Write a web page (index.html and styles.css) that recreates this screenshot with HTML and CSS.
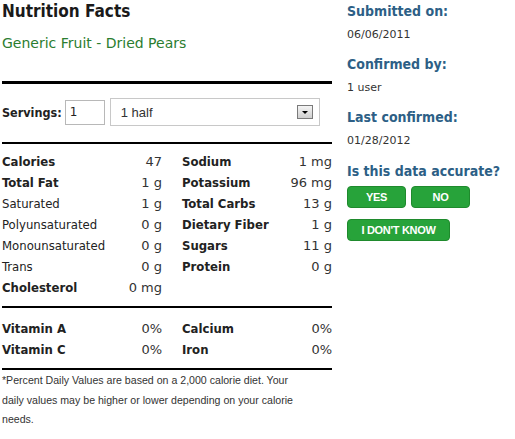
FILE: index.html
```html
<html>
<head>
<title>Nutrition Facts</title>
<link rel="stylesheet" href="styles.css">
</head>
<body>

<div class="page">
	<div class="facts">
		<h1 class="factsTitle">Nutrition Facts</h1>
		<div class="foodName">Generic Fruit - Dried Pears</div>

		<div class="servings">
			<label>Servings:</label>
			<input class="servingsQty" type="text" value="1">
			<div class="servingsUnit">
				<span>1 half</span>
				<span class="arrow"></span>
			</div>
		</div>

		<div class="nutrients">
			<div class="cell"><b>Calories</b><span>47</span></div>
			<div class="cell"><b>Sodium</b><span>1 mg</span></div>
			<div class="cell"><b>Total Fat</b><span>1 g</span></div>
			<div class="cell"><b>Potassium</b><span>96 mg</span></div>
			<div class="cell"><i>Saturated</i><span>1 g</span></div>
			<div class="cell"><b>Total Carbs</b><span>13 g</span></div>
			<div class="cell"><i>Polyunsaturated</i><span>0 g</span></div>
			<div class="cell"><b>Dietary Fiber</b><span>1 g</span></div>
			<div class="cell"><i>Monounsaturated</i><span>0 g</span></div>
			<div class="cell"><b>Sugars</b><span>11 g</span></div>
			<div class="cell"><i>Trans</i><span>0 g</span></div>
			<div class="cell"><b>Protein</b><span>0 g</span></div>
			<div class="cell"><b>Cholesterol</b><span>0 mg</span></div>
			<div class="cell"></div>
		</div>

		<div class="nutrients vitamins">
			<div class="cell"><b>Vitamin A</b><span>0%</span></div>
			<div class="cell"><b>Calcium</b><span>0%</span></div>
			<div class="cell"><b>Vitamin C</b><span>0%</span></div>
			<div class="cell"><b>Iron</b><span>0%</span></div>
		</div>

		<p class="footnote">*Percent Daily Values are based on a 2,000 calorie diet. Your daily values may be higher or lower depending on your calorie needs.</p>
	</div>

	<div class="sidebar">
		<h3>Submitted on:</h3>
		<div class="info">06/06/2011</div>
		<h3>Confirmed by:</h3>
		<div class="info">1 user</div>
		<h3>Last confirmed:</h3>
		<div class="info">01/28/2012</div>
		<h3 class="question">Is this data accurate?</h3>
		<div class="buttons">
			<a href="#" class="btn">YES</a>
			<a href="#" class="btn">NO</a>
		</div>
		<div class="buttons">
			<a href="#" class="btn wide">I DON'T KNOW</a>
		</div>
	</div>
</div>

</body>
</html>
```

FILE: styles.css
```css
body {
    margin: 0;
    font-family: "DejaVu Sans Condensed", "DejaVu Sans", sans-serif;
    color: #222;
    background: #fff;
}
.page {
    display: flex;
    padding: 1px 0 0 2px;
}
.facts {
    width: 330px;
}
h1.factsTitle {
    margin: 0;
    font-size: 17px;
    line-height: 20px;
    color: #1a1a1a;
}
.foodName {
    margin-top: 13px;
    font-family: "DejaVu Sans", sans-serif;
    font-size: 14px;
    line-height: 18px;
    color: #2b7d2f;
}
.servings {
    display: flex;
    align-items: center;
    margin-top: 29px;
    border-top: 3px solid #000;
    border-bottom: 2px solid #000;
    padding: 14px 0 16px;
}
.servings label {
    font-weight: bold;
    font-size: 12.5px;
    margin-right: 3px;
}
input.servingsQty {
    box-sizing: border-box;
    width: 40px;
    height: 25px;
    margin: 0;
    border: 1px solid #b8b8b8;
    padding: 0 4px;
    font-family: "DejaVu Sans", sans-serif;
    font-size: 12px;
    color: #222;
}
.servingsUnit {
    display: flex;
    align-items: center;
    justify-content: space-between;
    box-sizing: border-box;
    width: 210px;
    height: 28px;
    margin-left: 5px;
    border: 1px solid #c8c8c8;
    padding: 0 6px 0 10px;
    font-family: "Liberation Sans", sans-serif;
    font-size: 13px;
    color: #333;
}
.arrow {
    box-sizing: border-box;
    width: 16px;
    height: 14px;
    border: 1px solid #7a7a7a;
    background: linear-gradient(#f4f4f4, #cfcfcf);
    position: relative;
}
.arrow::after {
    content: "";
    position: absolute;
    left: 4px;
    top: 5px;
    border-left: 3px solid transparent;
    border-right: 3px solid transparent;
    border-top: 3px solid #000;
}
.nutrients {
    display: grid;
    grid-template-columns: 160px 150px;
    column-gap: 20px;
    padding: 7px 0 8px;
    border-bottom: 2px solid #000;
    font-size: 13px;
}
.vitamins {
    padding: 10px 0 8px;
}
.cell {
    display: flex;
    justify-content: space-between;
    height: 21px;
    line-height: 21px;
}
.cell b {
    color: #222;
}
.cell i {
    font-style: normal;
    color: #222;
}
.cell span {
    font-family: "DejaVu Sans", sans-serif;
    color: #333;
}
.footnote {
    width: 300px;
    margin: 0;
    padding-top: 1px;
    font-family: "Liberation Sans", sans-serif;
    font-size: 10.6px;
    line-height: 19.5px;
    color: #333;
}
.sidebar {
    margin-left: 15px;
    padding-top: 1px;
}
.sidebar h3 {
    margin: 0 0 7px;
    font-size: 14px;
    line-height: 18px;
    color: #2d5f86;
}
.sidebar .info {
    margin: 0 0 12px;
    font-family: "DejaVu Sans", sans-serif;
    font-size: 11px;
    line-height: 16px;
    color: #333;
}
.sidebar h3.question {
    margin: 13px 0 6px;
}
.buttons {
    display: flex;
    gap: 5px;
    margin-bottom: 11px;
}
a.btn {
    display: block;
    box-sizing: border-box;
    width: 59px;
    height: 22px;
    line-height: 20px;
    border: 1px solid #1f8a2d;
    border-radius: 4px;
    background: #27a33a;
    color: #fff;
    text-align: center;
    text-decoration: none;
    font-family: "Liberation Sans", sans-serif;
    font-weight: bold;
    font-size: 11px;
    letter-spacing: -0.3px;
}
a.btn.wide {
    width: 103px;
}
```
